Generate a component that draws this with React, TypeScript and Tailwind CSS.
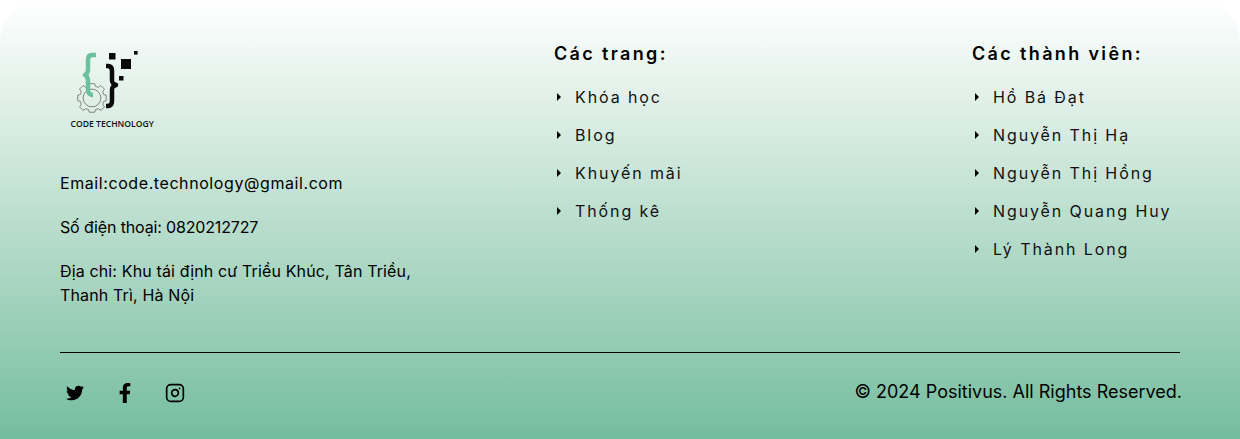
import { FaFacebookF, FaTwitter } from "react-icons/fa";
import { Instagram } from "lucide-react";

const pages = ["Khóa học", "Blog", "Khuyến mãi", "Thống kê"];
const members = ["Hồ Bá Đạt", "Nguyễn Thị Hạ", "Nguyễn Thị Hồng", "Nguyễn Quang Huy", "Lý Thành Long"];

function Logo() {
  return (
    <svg viewBox="0 0 100 96" className="block h-[96px] w-[100px]">
      {/* gear */}
      <g transform="translate(32 60) scale(.89) translate(-27 -53)" fill="none" stroke="#444" strokeWidth="0.7">
        <circle cx="27" cy="53" r="10" />
        <path d="M24 37h6l1 3 3 1 3-2 4 4-2 3 1 3 3 1v6l-3 1-1 3 2 3-4 4-3-2-3 1-1 3h-6l-1-3-3-1-3 2-4-4 2-3-1-3-3-1v-6l3-1 1-3-2-3 4-4 3 2 3-1z" />
      </g>
      {/* green brace */}
      <path
        d="M36 17h-4c-3 0-4 2-4 5v9c0 3-1 5-3 6 2 1 3 3 3 6v9c0 3 2 5 5 5"
        fill="none"
        stroke="#6cc0a0"
        strokeWidth="4.5"
        strokeLinejoin="round"
      />
      {/* black brace */}
      <path
        d="M46 28h2c3 0 4 2 4 5v9c0 3 1 4 4 5-3 1-4 2-4 5v11c0 3-1 5-4 5h-2"
        fill="none"
        stroke="#0a0a0a"
        strokeWidth="4.5"
        strokeLinejoin="round"
      />
      <rect x="49" y="15" width="6.5" height="6.5" fill="#0a0a0a" />
      <rect x="61" y="21" width="10" height="10" fill="#0a0a0a" />
      <rect x="59" y="38" width="4.5" height="4.5" fill="#0a0a0a" />
      <rect x="74" y="13" width="3.6" height="3.6" fill="#0a0a0a" />
      <text x="10.5" y="89" className="fill-[#111] text-[8.6px] font-semibold [font-family:'Open_Sans',sans-serif]">
        CODE TECHNOLOGY
      </text>
    </svg>
  );
}

function LinkRow({ label }: { label: string }) {
  return (
    <li className="flex h-[38px] items-center">
      <svg viewBox="0 0 4 8" className="ml-[3px] h-2 w-1 shrink-0">
        <path d="M0 0l4 4-4 4z" fill="#000" />
      </svg>
      <span className="ml-[14px] whitespace-nowrap text-base tracking-[1.9px] text-[#111]">{label}</span>
    </li>
  );
}

function App() {
  return (
    <footer className="h-[439px] overflow-hidden rounded-t-[40px] bg-gradient-to-b from-white to-[#74bd9f] px-[60px] font-['Inter',sans-serif] text-black">
      <div className="grid h-[353px] grid-cols-[494px_418px_1fr] border-b border-black">
        <div className="pt-[38px]">
          <Logo />
          <div className="mt-[37px] w-[370px] text-base leading-6">
            <p className="tracking-[0.58px]">Email:code.technology@gmail.com</p>
            <p className="mt-5 tracking-[-0.15px]">Số điện thoại: 0820212727</p>
            <p className="mt-5 tracking-[0.14px]">Địa chỉ: Khu tái định cư Triều Khúc, Tân Triều, Thanh Trì, Hà Nội</p>
          </div>
        </div>
        <div className="pt-[40px]">
          <h3 className="text-lg leading-[27px] font-semibold tracking-[2.35px]">Các trang:</h3>
          <ul className="mt-[11px]">
            {pages.map((p) => (
              <LinkRow key={p} label={p} />
            ))}
          </ul>
        </div>
        <div className="pt-[40px]">
          <h3 className="text-lg leading-[27px] font-semibold tracking-[2.35px]">Các thành viên:</h3>
          <ul className="mt-[11px]">
            {members.map((m) => (
              <LinkRow key={m} label={m} />
            ))}
          </ul>
        </div>
      </div>
      <div className="flex items-center justify-between pt-[25px]">
        <div className="flex items-center gap-5">
          <span className="flex w-[30px] justify-center">
            <FaTwitter className="size-[18px]" />
          </span>
          <span className="flex w-[30px] justify-center">
            <FaFacebookF className="size-5" />
          </span>
          <span className="flex w-[30px] justify-center">
            <Instagram className="size-5" strokeWidth={2} />
          </span>
        </div>
        <p className="mr-[-2px] mb-[2px] text-lg">© 2024 Positivus. All Rights Reserved.</p>
      </div>
    </footer>
  );
}

export default App;
